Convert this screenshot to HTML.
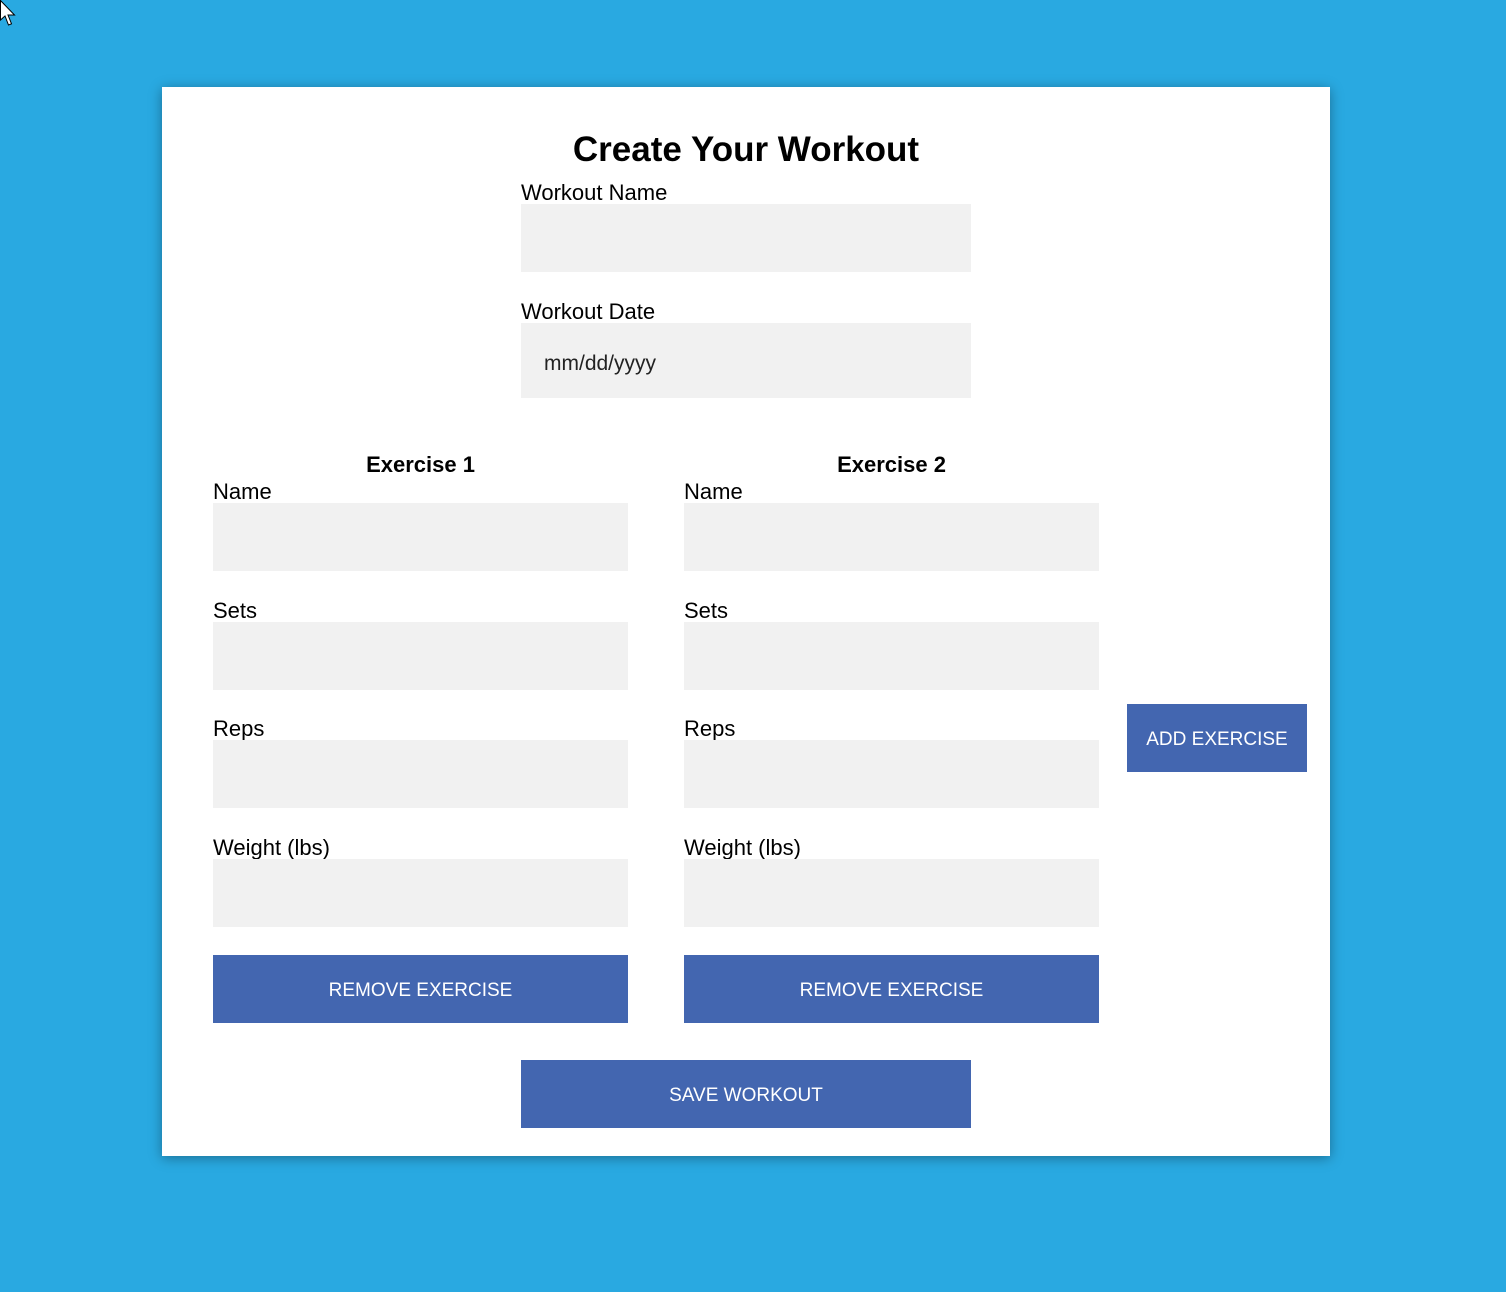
<!DOCTYPE html>
<html><head><style>
body{margin:0;width:1506px;height:1292px;background:#29a9e1;position:relative;overflow:hidden;font-family:"Liberation Sans",sans-serif;color:#000}
.card{position:absolute;left:162px;top:87px;width:1168px;height:1069px;background:#fff;box-shadow:0 2px 12px rgba(0,0,0,.35)}
.a{position:absolute}
.l{position:absolute;font-size:22px;line-height:24px;white-space:nowrap}
.i{position:absolute;background:#f1f1f1;height:68px}
.b{position:absolute;background:#4366b0;color:#fff;font-size:19px;display:flex;align-items:center;justify-content:center;height:65px;padding-top:3px}
h1{position:absolute;margin:0;left:0;width:1492px;text-align:center;top:129px;font-size:35px;font-weight:bold;line-height:42px}
.h{position:absolute;font-weight:bold;font-size:22px;text-align:center;width:415px;top:452px}
</style></head><body>
<svg class="a" style="left:0;top:0" width="20" height="28" viewBox="0 0 20 28"><path d="M0.5 0.5 L0.5 20 L5 16 L8.5 25 L11.5 23.8 L8 15 L14.5 15 Z" fill="#fff" stroke="#000" stroke-width="1"/></svg>
<div class="card"></div>
<h1>Create Your Workout</h1>
<div class="l" style="left:521px;top:181px">Workout Name</div>
<div class="i" style="left:521px;top:204px;width:450px"></div>
<div class="l" style="left:521px;top:300px">Workout Date</div>
<div class="i" style="left:521px;top:323px;width:450px;height:75px"></div>
<div class="l" style="left:544px;top:352px;font-size:21px;color:#222">mm/dd/yyyy</div>

<div class="h" style="left:213px">Exercise 1</div>
<div class="h" style="left:684px">Exercise 2</div>

<div class="l" style="left:213px;top:480px">Name</div><div class="i" style="left:213px;top:503px;width:415px"></div>
<div class="l" style="left:213px;top:599px">Sets</div><div class="i" style="left:213px;top:622px;width:415px"></div>
<div class="l" style="left:213px;top:717px">Reps</div><div class="i" style="left:213px;top:740px;width:415px"></div>
<div class="l" style="left:213px;top:836px">Weight (lbs)</div><div class="i" style="left:213px;top:859px;width:415px"></div>
<div class="b" style="left:213px;top:955px;width:415px">REMOVE EXERCISE</div>

<div class="l" style="left:684px;top:480px">Name</div><div class="i" style="left:684px;top:503px;width:415px"></div>
<div class="l" style="left:684px;top:599px">Sets</div><div class="i" style="left:684px;top:622px;width:415px"></div>
<div class="l" style="left:684px;top:717px">Reps</div><div class="i" style="left:684px;top:740px;width:415px"></div>
<div class="l" style="left:684px;top:836px">Weight (lbs)</div><div class="i" style="left:684px;top:859px;width:415px"></div>
<div class="b" style="left:684px;top:955px;width:415px">REMOVE EXERCISE</div>

<div class="b" style="left:1127px;top:704px;width:180px">ADD EXERCISE</div>
<div class="b" style="left:521px;top:1060px;width:450px">SAVE WORKOUT</div>
</body></html>
